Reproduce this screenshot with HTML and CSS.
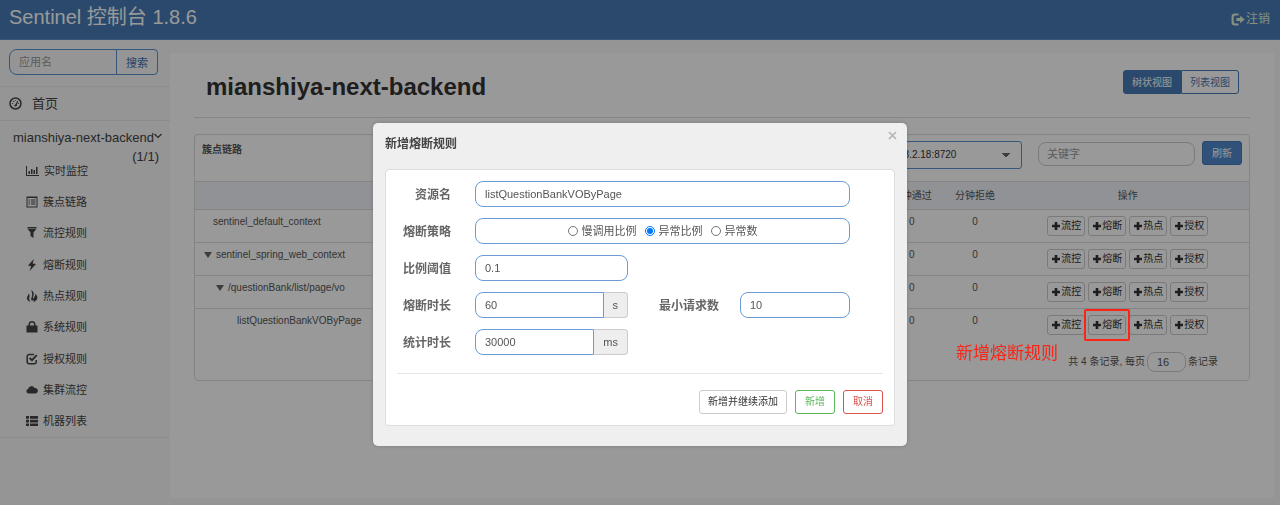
FILE: index.html
```
<!DOCTYPE html>
<html lang="zh-CN">
<head>
    <meta charset="utf-8" />
    <title>Sentinel 控制台</title>
    <link rel="stylesheet" href="styles.css">
</head>
<body>
    <svg class="sprite" aria-hidden="true">
        <symbol id="plus" viewBox="0 0 10 10"><path d="M3.700 1h2.600v2.700H9v2.600H6.300V9H3.700V6.300H1V3.700h2.700z"/></symbol>
    </svg>

    <header class="navbar">
        <span class="brand">Sentinel 控制台 1.8.6</span>
        <a href="#" class="logout">
            <svg width="14" height="13" viewBox="0 0 13 12"><path d="M7 .5H3.500A3 3 0 0 0 .5 3.500v5a3 3 0 0 0 3 3H7V9.700H4A1.500 1.500 0 0 1 2.500 8.200V3.800A1.500 1.500 0 0 1 4 2.300h3z"/><path d="M8.500 2.500 12.800 6 8.500 9.500V7.500H5v-3h3.500z"/></svg>
            注销
        </a>
    </header>

    <div class="layout">
        <nav class="sidebar">
            <form class="app-search">
                <input type="text" placeholder="应用名" aria-label="应用名">
                <button type="button">搜索</button>
            </form>
            <a href="#" class="home">
                <svg width="13" height="13" viewBox="0 0 13 13"><circle cx="6.500" cy="6.500" r="5.500" fill="none" stroke="currentColor" stroke-width="1.500"/><path d="M6 8.500 8.300 3.800l.8.4L7.500 9z"/><circle cx="6.500" cy="8.500" r="1.100"/><circle cx="3.600" cy="6.500" r=".6"/><circle cx="4.600" cy="4.300" r=".6"/><circle cx="6.600" cy="3.400" r=".5"/><circle cx="9.500" cy="6.500" r=".6"/></svg>
                首页
            </a>
            <a href="#" class="app">
                <span>mianshiya-next-backend</span>
                <svg width="8" height="13" viewBox="0 0 8 13"><path d="M.5 3 4 6.500 7.500 3" fill="none" stroke="currentColor" stroke-width="1.200"/></svg>
                <span class="count">(1/1)</span>
            </a>
            <ul class="menu">
                <li><a href="#"><svg width="13" height="12" viewBox="0 0 13 12"><path d="M0 1h1v9h12v1H0zM2.500 6H4v3H2.500zM5 4h1.500v5H5zM7.500 5H9v4H7.500zM10 2h1.500v7H10z"/></svg>实时监控</a></li>
                <li><a href="#"><svg width="12" height="12" viewBox="0 0 12 12"><path fill-rule="evenodd" d="M.5.500h11v11H.5zM1.500 2v8.500h9V2z"/><path d="M2.500 3.500H4v1H2.500zM5 3.500h4.500v1H5zM2.500 5.500H4v1H2.500zM5 5.500h4.500v1H5zM2.500 7.500H4v1H2.500zM5 7.500h4.500v1H5z"/></svg>簇点链路</a></li>
                <li><a href="#"><svg width="12" height="12" viewBox="0 0 12 12"><path d="M1.500 0h9v1.500h-9zM1.700 2h8.600L7.500 5.500V11l-3-2V5.500z"/></svg>流控规则</a></li>
                <li><a href="#"><svg width="12" height="12" viewBox="0 0 12 12"><path d="M7.800 0 2 6.500l3.100.7L3.600 12 10 5 6.700 4.400z"/></svg>熔断规则</a></li>
                <li><a href="#"><svg width="12" height="12" viewBox="0 0 12 12"><path d="M5.300 0c2.300 1.700 3 3.500 2.200 5.500-.5 1.200-1 2 .1 3 .6-.6.8-1.300.6-2.200 1 .3 1.200-.9.700-2.600 2 1.400 3 3.200 2.200 5.200-.5 1.400-1.800 2.500-3.600 3 .5-.9.200-1.800-.4-2.200-.2.900-.6 1.200-1.300.9-.8-.6-.8-1.500-.3-2.800C6.300 5.800 6.500 3.500 5.300 0zM2.600 3.500c1.100 1.300 1.200 2.300.8 3.400-.5 1.400-.3 3 1.200 4.800C2.400 11.300.8 9.800.9 7.900c.1-1.500 1.700-2.400 1.700-4.400z"/></svg>热点规则</a></li>
                <li><a href="#"><svg width="12" height="12" viewBox="0 0 12 12"><path fill-rule="evenodd" d="M.5 4.500h2V3.500a3.500 3.500 0 0 1 7 0v1h2v7H.5zM4 4.500h4v-1a2 2 0 0 0-4 0z"/></svg>系统规则</a></li>
                <li><a href="#"><svg width="12" height="12" viewBox="0 0 12 12"><path d="M8 1.500H3.200A2 2 0 0 0 1.200 3.500v5.300a2 2 0 0 0 2 2h5a2 2 0 0 0 2-2V7" fill="none" stroke="currentColor" stroke-width="1.500"/><path d="M3.600 5 6 7.200l4.700-5" fill="none" stroke="currentColor" stroke-width="1.900"/></svg>授权规则</a></li>
                <li><a href="#"><svg width="12" height="12" viewBox="0 0 12 12"><path d="M2.500 9.500a2.300 2.300 0 0 1-.4-4.500A3.400 3.400 0 0 1 8.500 4 2.800 2.800 0 0 1 9.600 9.500z"/></svg>集群流控</a></li>
                <li><a href="#"><svg width="12" height="12" viewBox="0 0 12 12"><path d="M0 1h3v2.700H0zM4 1h8v2.700H4zM0 4.700h3v2.700H0zM4 4.700h8v2.700H4zM0 8.400h3V11H0zM4 8.400h8V11H4z"/></svg>机器列表</a></li>
            </ul>
        </nav>

        <main class="content">
            <div class="page-head">
                <h1>mianshiya-next-backend</h1>
                <div class="view-switch">
                    <button type="button" class="active">树状视图</button>
                    <button type="button">列表视图</button>
                </div>
            </div>

            <section class="card">
                <div class="card-head">
                    <strong>簇点链路</strong>
                    <select class="machine" aria-label="机器">
                        <option>192.168.2.18:8720</option>
                    </select>
                    <input type="text" class="keyword" placeholder="关键字" aria-label="关键字">
                    <button type="button" class="refresh">刷新</button>
                </div>
                <table class="resources">
                    <thead>
                        <tr>
                            <th class="name">资源名</th>
                            <th>通过QPS</th>
                            <th>拒绝QPS</th>
                            <th>并发数</th>
                            <th>平均RT</th>
                            <th>分钟通过</th>
                            <th>分钟拒绝</th>
                            <th class="ops">操作</th>
                        </tr>
                    </thead>
                    <tbody>
                        <tr>
                            <td class="name level-0">sentinel_default_context</td>
                            <td>0</td><td>0</td><td>0</td><td>0</td><td>0</td><td>0</td>
                            <td>
                                <div class="buttons">
                                    <button type="button"><svg><use href="#plus"/></svg>流控</button>
                                    <button type="button"><svg><use href="#plus"/></svg>熔断</button>
                                    <button type="button"><svg><use href="#plus"/></svg>热点</button>
                                    <button type="button"><svg><use href="#plus"/></svg>授权</button>
                                </div>
                            </td>
                        </tr>
                        <tr>
                            <td class="name level-1"><i class="caret"></i>sentinel_spring_web_context</td>
                            <td>0</td><td>0</td><td>0</td><td>0</td><td>0</td><td>0</td>
                            <td>
                                <div class="buttons">
                                    <button type="button"><svg><use href="#plus"/></svg>流控</button>
                                    <button type="button"><svg><use href="#plus"/></svg>熔断</button>
                                    <button type="button"><svg><use href="#plus"/></svg>热点</button>
                                    <button type="button"><svg><use href="#plus"/></svg>授权</button>
                                </div>
                            </td>
                        </tr>
                        <tr>
                            <td class="name level-2"><i class="caret"></i>/questionBank/list/page/vo</td>
                            <td>0</td><td>0</td><td>0</td><td>0</td><td>0</td><td>0</td>
                            <td>
                                <div class="buttons">
                                    <button type="button"><svg><use href="#plus"/></svg>流控</button>
                                    <button type="button"><svg><use href="#plus"/></svg>熔断</button>
                                    <button type="button"><svg><use href="#plus"/></svg>热点</button>
                                    <button type="button"><svg><use href="#plus"/></svg>授权</button>
                                </div>
                            </td>
                        </tr>
                        <tr>
                            <td class="name level-3">listQuestionBankVOByPage</td>
                            <td>0</td><td>0</td><td>0</td><td>0</td><td>0</td><td>0</td>
                            <td>
                                <div class="buttons">
                                    <button type="button"><svg><use href="#plus"/></svg>流控</button>
                                    <button type="button" class="marked"><svg><use href="#plus"/></svg>熔断<span class="mark"></span></button>
                                    <button type="button"><svg><use href="#plus"/></svg>热点</button>
                                    <button type="button"><svg><use href="#plus"/></svg>授权</button>
                                </div>
                            </td>
                        </tr>
                    </tbody>
                </table>
                <div class="pager">
                    <span class="mark-text">新增熔断规则</span>
                    <label for="page-size">共 4 条记录, 每页</label>
                    <input type="text" id="page-size" value="16">
                    <span>条记录</span>
                </div>
            </section>
        </main>
    </div>

    <div class="backdrop">
        <div class="dialog" role="dialog" aria-labelledby="dialog-title">
            <button type="button" class="close" aria-label="关闭"><svg width="9" height="9" viewBox="0 0 9 9"><path d="M1 1l7 7M8 1 1 8" stroke="currentColor" stroke-width="1.700"/></svg></button>
            <h2 id="dialog-title">新增熔断规则</h2>
            <form class="rule">
                <div class="row">
                    <label for="resource">资源名</label>
                    <input type="text" id="resource" value="listQuestionBankVOByPage">
                </div>
                <div class="row">
                    <span class="label" id="grade-label">熔断策略</span>
                    <div class="radios" role="radiogroup" aria-labelledby="grade-label">
                        <label><input type="radio" name="grade">慢调用比例</label>
                        <label><input type="radio" name="grade" checked>异常比例</label>
                        <label><input type="radio" name="grade">异常数</label>
                    </div>
                </div>
                <div class="row">
                    <label for="ratio">比例阈值</label>
                    <div class="group"><input type="text" id="ratio" class="single" value="0.1"></div>
                </div>
                <div class="row">
                    <label for="window">熔断时长</label>
                    <div class="pair">
                        <div class="group"><input type="text" id="window" value="60"><span>s</span></div>
                        <label for="min-request">最小请求数</label>
                        <input type="text" id="min-request" value="10">
                    </div>
                </div>
                <div class="row">
                    <label for="interval">统计时长</label>
                    <div class="group"><input type="text" id="interval" value="30000"><span>ms</span></div>
                </div>
                <div class="actions">
                    <button type="button">新增并继续添加</button>
                    <button type="button" class="save">新增</button>
                    <button type="button" class="cancel">取消</button>
                </div>
            </form>
        </div>
    </div>
</body>
</html>
```
FILE: styles.css
```
* {
    box-sizing: border-box;
}
body {
    margin: 0;
    min-height: 100vh;
    display: flex;
    flex-direction: column;
    font-family: "Liberation Sans", "Noto Sans CJK SC", sans-serif;
    font-size: 10px;
    line-height: 14px;
    color: #555;
    background: #f8f8f8;
}
a {
    color: #444;
    text-decoration: none;
}
svg {
    fill: currentColor;
    flex: none;
}
input, button, select {
    font: inherit;
    color: inherit;
    margin: 0;
    background: #fff;
}
button {
    padding: 1px 0 0;
    white-space: nowrap;
    border: 1px solid #ccc;
    border-radius: 3px;
}
::placeholder {
    color: #999;
    opacity: 1;
}
.sprite {
    position: absolute;
    width: 0;
    height: 0;
}

/* top bar */
.navbar {
    display: flex;
    justify-content: space-between;
    align-items: center;
    height: 40px;
    padding: 0 10px 5px 9px;
    color: #fff;
    background: #467bb5;
    border-bottom: 1px solid #5c91cb;
}
.brand {
    font-size: 20px;
    line-height: 28px;
}
.logout {
    display: flex;
    align-items: center;
    gap: 1px;
    padding-top: 4px;
    font-size: 12px;
    color: #dff0d8;
}

/* side menu */
.layout {
    flex: 1;
    display: flex;
}
.sidebar {
    width: 170px;
    font-size: 11px;
}
.app-search {
    display: flex;
    padding: 9px 12px 11px 9px;
    border-bottom: 1px solid #eaeaea;
}
.app-search input {
    flex: 1;
    min-width: 0;
    height: 26px;
    padding: 0 9px;
    border: 1px solid #5b91cf;
    border-radius: 8px 0 0 8px;
    background: none;
}
.app-search button {
    width: 42px;
    margin-left: -1px;
    color: #3f6fae;
    border-color: #5b91cf;
    border-radius: 0 4px 4px 0;
    background: none;
}
.home {
    display: flex;
    align-items: center;
    gap: 10px;
    height: 34px;
    padding-left: 9px;
    font-size: 13px;
    border-bottom: 1px solid #eaeaea;
}
.app {
    display: flex;
    flex-wrap: wrap;
    align-items: center;
    padding: 7px 7px 0 13px;
    font-size: 13px;
    line-height: 19px;
}
.count {
    flex-basis: 100%;
    padding-right: 4px;
    text-align: right;
}
.menu {
    display: grid;
    grid-auto-rows: 1fr;
    min-height: 283px;
    margin: -11px 0 0;
    padding: 0 0 0 26px;
    list-style: none;
    border-bottom: 1px solid #eaeaea;
}
.menu a {
    display: flex;
    align-items: center;
    gap: 5px;
    height: 100%;
}

/* page */
.content {
    flex: 1;
    min-width: 0;
    margin: 13px 6px 7px 0;
    padding: 0 24px;
    background: #fff;
}
.page-head {
    display: flex;
    justify-content: space-between;
    align-items: flex-start;
    padding: 17px 11px 13px 12px;
    margin-bottom: 16px;
    border-bottom: 1px solid #e0e0e0;
}
h1 {
    margin: 0;
    font-size: 24px;
    line-height: 34px;
    color: #333;
}
.view-switch {
    display: flex;
}
.view-switch button {
    width: 58px;
    height: 24px;
    color: #467bb5;
    border-color: #467bb5;
    border-radius: 0 3px 3px 0;
}
.view-switch .active {
    color: #fff;
    background: #467bb5;
    border-radius: 3px 0 0 3px;
}
.card {
    border: 1px solid #ddd;
    border-radius: 4px;
}
.card-head {
    display: flex;
    align-items: flex-start;
    padding: 6px 7px 12px;
}
.card-head strong {
    flex: 1;
    padding-top: 2px;
}
.machine {
    width: 162px;
    height: 28px;
    padding: 0 12px;
    color: #333;
    appearance: none;
    border: 1px solid #5b91cf;
    border-radius: 3px;
    background:
        linear-gradient(45deg, transparent 50%, #666 50%) right 15px center / 4px 4px no-repeat,
        linear-gradient(-45deg, transparent 50%, #666 50%) right 11px center / 4px 4px no-repeat;
}
.keyword {
    width: 157px;
    height: 24px;
    margin: 1px 7px 0 16px;
    padding: 0 8px;
    font-size: 11px;
    border: 1px solid #ccc;
    border-radius: 8px;
}
.refresh {
    width: 40px;
    height: 24px;
    color: #fff;
    background: #5187cb;
    border-color: #467bb5;
}
.resources {
    width: 100%;
    table-layout: fixed;
    border-collapse: collapse;
    text-align: center;
}
.resources th {
    width: 6%;
    height: 28px;
    padding: 0;
    font-weight: normal;
    background: #f1f4f8;
    border-top: 1px solid #ddd;
}
.resources td {
    height: 33px;
    padding: 5px 0 0;
    vertical-align: top;
    border-top: 1px solid #ddd;
}
.resources .name {
    width: auto;
    text-align: left;
}
.resources th.name {
    padding-left: 190px;
}
.resources .ops {
    width: 23%;
}
.resources .level-0 {
    padding-left: 18px;
}
.resources .level-1 {
    padding-left: 9px;
}
.resources .level-2 {
    padding-left: 21px;
}
.resources .level-3 {
    padding-left: 42px;
}
.buttons {
    display: flex;
    justify-content: center;
    gap: 3px;
    padding-top: 1px;
}
.buttons button {
    display: flex;
    align-items: center;
    justify-content: center;
    width: 38px;
    height: 20px;
    padding: 0;
    color: #333;
}
.buttons svg {
    width: 10px;
    height: 10px;
}
.caret {
    display: inline-block;
    margin-right: 4px;
    border: 4px solid transparent;
    border-top: 6px solid #666;
    border-bottom: 0;
}
.pager {
    position: relative;
    display: flex;
    align-items: center;
    justify-content: flex-end;
    gap: 2px;
    padding: 10px 31px 8px;
}
.pager input {
    width: 39px;
    height: 20px;
    padding: 0 9px;
    font-size: 11px;
    border: 1px solid #ccc;
    border-radius: 8px;
}

/* red callout, stays above the backdrop */
.marked {
    position: relative;
}
.mark {
    position: absolute;
    z-index: 20;
    inset: -7px -5px;
    border: 2px solid #fb2416;
    border-radius: 2px;
}
.mark-text {
    position: absolute;
    z-index: 20;
    top: 0;
    right: 191px;
    font-size: 17px;
    line-height: 24px;
    color: #fb2416;
}

/* dialog */
.backdrop {
    position: fixed;
    z-index: 10;
    inset: 0;
    display: flex;
    justify-content: center;
    align-items: flex-start;
    padding-top: 123px;
    background: rgba(0,0,0,0.4);
}
.dialog {
    position: relative;
    width: 534px;
    padding: 12px 12px 20px;
    background: #efefef;
    border-radius: 5px;
    box-shadow: 0 0 4px rgba(0,0,0,0.2);
}
.close {
    position: absolute;
    top: 7px;
    right: 10px;
    display: flex;
    color: #b5b5b5;
    background: none;
    border: 0;
}
h2 {
    margin: 0 0 16px;
    font-size: 12px;
    line-height: 18px;
    color: #444;
}
.rule {
    padding: 11px;
    background: #fff;
    border: 1px solid #ddd;
    border-radius: 4px;
}
.row {
    display: grid;
    grid-template-columns: 54px 375px;
    gap: 24px;
    margin-bottom: 11px;
    font-size: 11px;
}
.row > label, .label, .pair > label {
    padding-top: 2px;
    font-size: 12px;
    line-height: 24px;
    font-weight: bold;
    text-align: right;
    white-space: nowrap;
    color: #666;
}
.rule input[type="text"], .radios {
    width: 100%;
    height: 26px;
    padding: 0 9px;
    border: 1px solid #6b9bd2;
    border-radius: 8px;
}
.radios {
    display: flex;
    justify-content: center;
    gap: 8px;
}
.radios label {
    display: flex;
    align-items: center;
    gap: 4px;
}
.radios input {
    width: 10px;
    height: 10px;
}
.group {
    display: flex;
    width: 153px;
}
.rule .group input {
    flex: 1;
    min-width: 0;
    border-radius: 8px 0 0 8px;
}
.rule .group .single {
    border-radius: 8px;
}
.group span {
    padding: 0 9px;
    line-height: 24px;
    background: #eee;
    border: 1px solid #ccc;
    border-left: 0;
    border-radius: 0 4px 4px 0;
}
.pair {
    display: grid;
    grid-template-columns: 153px 1fr 110px;
    gap: 21px;
}
.actions {
    display: flex;
    justify-content: flex-end;
    gap: 8px;
    margin-top: 18px;
    padding-top: 16px;
    border-top: 1px solid #e5e5e5;
}
.actions button {
    min-width: 40px;
    height: 24px;
    padding: 0 8px;
    color: #333;
}
.actions .save {
    color: #5cb85c;
    border-color: #5cb85c;
}
.actions .cancel {
    color: #d9534f;
    border-color: #d9534f;
}
```
